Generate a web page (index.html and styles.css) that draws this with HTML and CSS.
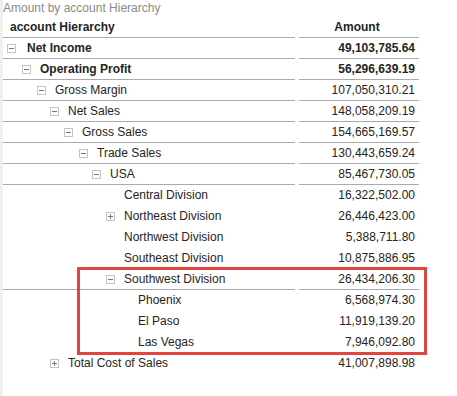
FILE: index.html
```html
<!DOCTYPE html>
<html>
<head>
<meta charset="utf-8">
<link rel="stylesheet" href="styles.css">
</head>
<body>
<div class="visual">
  <div class="title">Amount by account Hierarchy</div>
  <div class="matrix">
    <div class="row header"><div class="c1">account Hierarchy</div><div class="c2">Amount</div></div>

    <div class="row line bold"><div class="c1 l0"><svg class="ic" width="9" height="9"><rect x="0.5" y="0.5" width="8" height="8" fill="#fff" stroke="#c4c4c4"/><path d="M2 4.5h5" stroke="#777"/></svg><span>Net Income</span></div><div class="c2">49,103,785.64</div></div>
    <div class="row line bold"><div class="c1 l1"><svg class="ic" width="9" height="9"><rect x="0.5" y="0.5" width="8" height="8" fill="#fff" stroke="#c4c4c4"/><path d="M2 4.5h5" stroke="#777"/></svg><span>Operating Profit</span></div><div class="c2">56,296,639.19</div></div>
    <div class="row line"><div class="c1 l2"><svg class="ic" width="9" height="9"><rect x="0.5" y="0.5" width="8" height="8" fill="#fff" stroke="#c4c4c4"/><path d="M2 4.5h5" stroke="#777"/></svg><span>Gross Margin</span></div><div class="c2">107,050,310.21</div></div>
    <div class="row line"><div class="c1 l3"><svg class="ic" width="9" height="9"><rect x="0.5" y="0.5" width="8" height="8" fill="#fff" stroke="#c4c4c4"/><path d="M2 4.5h5" stroke="#777"/></svg><span>Net Sales</span></div><div class="c2">148,058,209.19</div></div>
    <div class="row line"><div class="c1 l4"><svg class="ic" width="9" height="9"><rect x="0.5" y="0.5" width="8" height="8" fill="#fff" stroke="#c4c4c4"/><path d="M2 4.5h5" stroke="#777"/></svg><span>Gross Sales</span></div><div class="c2">154,665,169.57</div></div>
    <div class="row line"><div class="c1 l5"><svg class="ic" width="9" height="9"><rect x="0.5" y="0.5" width="8" height="8" fill="#fff" stroke="#c4c4c4"/><path d="M2 4.5h5" stroke="#777"/></svg><span>Trade Sales</span></div><div class="c2">130,443,659.24</div></div>
    <div class="row line"><div class="c1 l6"><svg class="ic" width="9" height="9"><rect x="0.5" y="0.5" width="8" height="8" fill="#fff" stroke="#c4c4c4"/><path d="M2 4.5h5" stroke="#777"/></svg><span>USA</span></div><div class="c2">85,467,730.05</div></div>
    <div class="row"><div class="c1 l7"><span class="sp"></span><span>Central Division</span></div><div class="c2">16,322,502.00</div></div>
    <div class="row"><div class="c1 l7"><svg class="ic" width="9" height="9"><rect x="0.5" y="0.5" width="8" height="8" fill="#fff" stroke="#c4c4c4"/><path d="M2 4.5h5M4.5 2v5" stroke="#777"/></svg><span>Northeast Division</span></div><div class="c2">26,446,423.00</div></div>
    <div class="row"><div class="c1 l7"><span class="sp"></span><span>Northwest Division</span></div><div class="c2">5,388,711.80</div></div>
    <div class="row"><div class="c1 l7"><span class="sp"></span><span>Southeast Division</span></div><div class="c2">10,875,886.95</div></div>
    <div class="row line"><div class="c1 l7"><svg class="ic" width="9" height="9"><rect x="0.5" y="0.5" width="8" height="8" fill="#fff" stroke="#c4c4c4"/><path d="M2 4.5h5" stroke="#777"/></svg><span>Southwest Division</span></div><div class="c2">26,434,206.30</div></div>
    <div class="row"><div class="c1 l8"><span class="sp"></span><span>Phoenix</span></div><div class="c2">6,568,974.30</div></div>
    <div class="row"><div class="c1 l8"><span class="sp"></span><span>El Paso</span></div><div class="c2">11,919,139.20</div></div>
    <div class="row"><div class="c1 l8"><span class="sp"></span><span>Las Vegas</span></div><div class="c2">7,946,092.80</div></div>
    <div class="row"><div class="c1 l3"><svg class="ic" width="9" height="9"><rect x="0.5" y="0.5" width="8" height="8" fill="#fff" stroke="#c4c4c4"/><path d="M2 4.5h5M4.5 2v5" stroke="#777"/></svg><span>Total Cost of Sales</span></div><div class="c2">41,007,898.98</div></div>

    <div class="highlight"></div>
  </div>
</div>
</body>
</html>
```

FILE: styles.css
```css
html, body {
  margin: 0;
  padding: 0;
  background: #fff;
}

body {
  font-family: "Liberation Sans", Arial, sans-serif;
  font-size: 12px;
  color: #252423;
}

.visual {
  border-left: 3px solid #efefef;
  height: 396px;
  box-sizing: border-box;
}

.title {
  height: 17px;
  line-height: 15px;
  padding-top: 1px;
  box-sizing: border-box;
  color: #8a8a8a;
  white-space: nowrap;
}

.matrix {
  position: relative;
}

.row {
  display: grid;
  grid-template-columns: 292px 120px;
  column-gap: 4px;
}

.row > div {
  height: 20px;
  line-height: 20px;
  border-bottom: 1px solid transparent;
  white-space: nowrap;
}

.row.line > div,
.row.header > div {
  border-bottom-color: #ababab;
}

.header {
  font-weight: bold;
  color: #1f1f1f;
}

.header .c1 {
  padding-left: 7px;
}

.header .c2 {
  text-align: center;
}

.bold {
  font-weight: bold;
}

.c1 {
  display: flex;
  align-items: center;
}

.c2 {
  text-align: right;
  padding-right: 4px;
}

.ic,
.sp {
  flex: none;
  width: 9px;
  height: 9px;
  margin-right: 9px;
  display: block;
}

.l0 { padding-left: 4px; }
.l0 .ic { margin-right: 11px; }
.l1 { padding-left: 19px; }
.l2 { padding-left: 34px; }
.l3 { padding-left: 47px; }
.l4 { padding-left: 61px; }
.l5 { padding-left: 76px; }
.l6 { padding-left: 89px; }
.l7 { padding-left: 103px; }
.l8 { padding-left: 117px; }

.highlight {
  position: absolute;
  left: 74px;
  top: 250px;
  width: 344px;
  height: 82px;
  border: 3px solid #e2443f;
  pointer-events: none;
}
```
